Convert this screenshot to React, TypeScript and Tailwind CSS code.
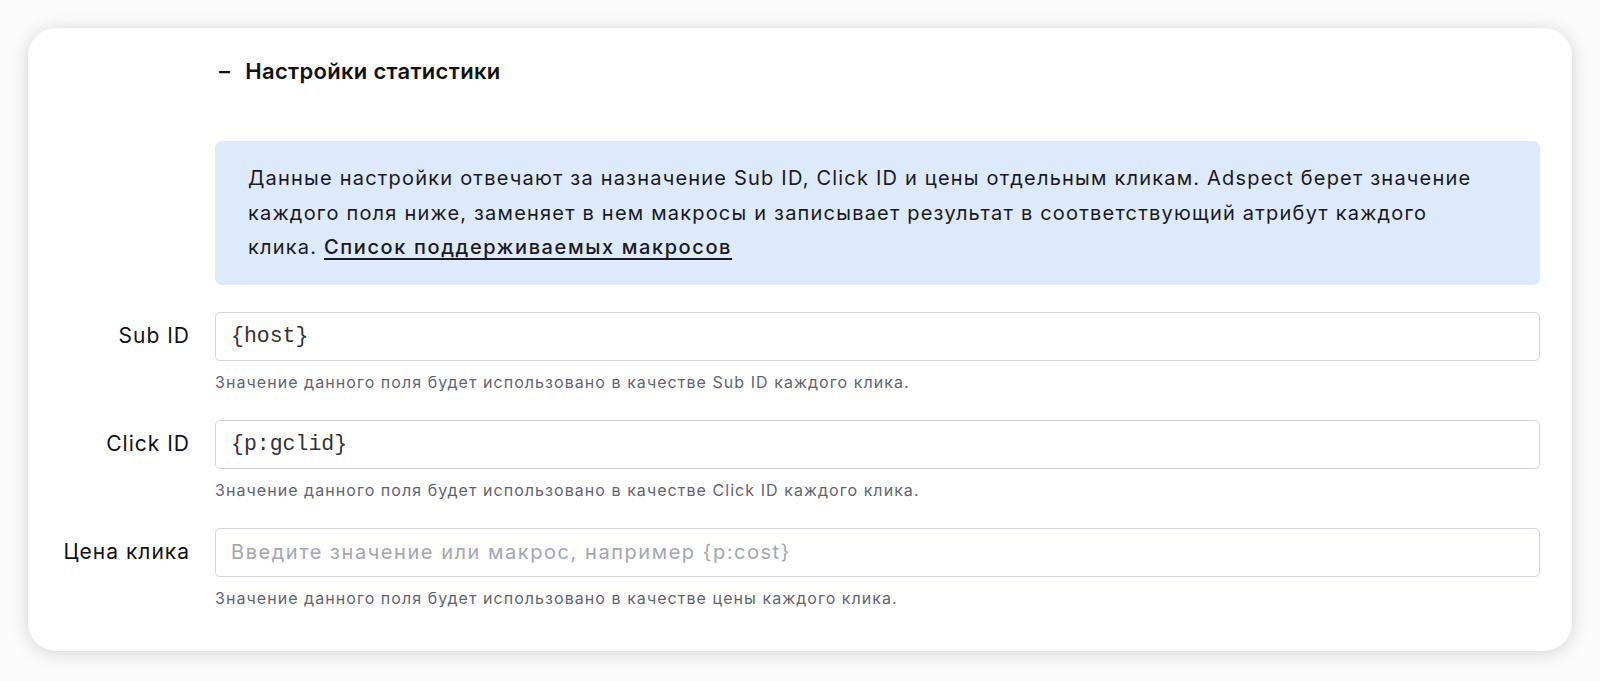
import React from 'react';

interface FieldRowProps {
  label: string;
  value?: string;
  placeholder?: string;
  hint: string;
}

const FieldRow: React.FC<FieldRowProps> = ({ label, value, placeholder, hint }) => (
  <>
    <div className="flex h-[49px] items-center justify-end text-[21px] tracking-[1px] text-[#111111]">{label}</div>
    <div>
      <input
        type="text"
        defaultValue={value}
        placeholder={placeholder}
        className={`block h-[49px] w-full rounded-[5px] border border-[#d3d6dc] bg-white px-[15px] text-[#333333] outline-none placeholder:text-[#a3a7ae] ${
          value ? "font-['Liberation_Mono',monospace] text-[21.5px]" : 'text-[20px] tracking-[1.55px]'
        }`}
      />
      <p className="mt-[11px] text-[16px] leading-[20px] tracking-[1.05px] text-[#5f6570]">{hint}</p>
    </div>
  </>
);

export default function App() {
  return (
    <div className="min-h-screen bg-[#fbfbfb] px-[28px] pt-[28px] font-['Inter','Noto_Sans',sans-serif]">
      <div className="rounded-[28px] bg-white pl-[32px] pr-[32px] pt-[29px] pb-[43px] shadow-[0_2px_18px_rgba(0,0,0,0.16)]">
        <div className="grid grid-cols-[130px_1fr] gap-x-[25px]">
          <div />
          <h2 className="flex h-[28px] items-center gap-[15px] pl-[4px] text-[22px] font-semibold tracking-[0.3px] text-[#111111]">
            <span>–</span>
            <span>Настройки статистики</span>
          </h2>

          <div />
          <div className="mt-[56px] mb-[27px] rounded-[7px] bg-[#dde9fd] py-[20px] pl-[33px] pr-[40px] text-[20px] leading-[34.5px] tracking-[1.2px] text-[#1a1a1a]">
            Данные настройки отвечают за назначение Sub ID, Click ID и цены отдельным кликам. Adspect берет значение
            каждого поля ниже, заменяет в нем макросы и записывает результат в соответствующий атрибут каждого
            клика.{' '}
            <a href="#" className="font-medium tracking-[1.6px] underline decoration-[1.5px] underline-offset-[4px]">
              Список поддерживаемых макросов
            </a>
          </div>
        </div>

        <div className="grid grid-cols-[130px_1fr] gap-x-[25px] gap-y-[28px]">
          <FieldRow
            label="Sub ID"
            value="{host}"
            hint="Значение данного поля будет использовано в качестве Sub ID каждого клика."
          />
          <FieldRow
            label="Click ID"
            value="{p:gclid}"
            hint="Значение данного поля будет использовано в качестве Click ID каждого клика."
          />
          <FieldRow
            label="Цена клика"
            placeholder="Введите значение или макрос, например {p:cost}"
            hint="Значение данного поля будет использовано в качестве цены каждого клика."
          />
        </div>
      </div>
    </div>
  );
}
